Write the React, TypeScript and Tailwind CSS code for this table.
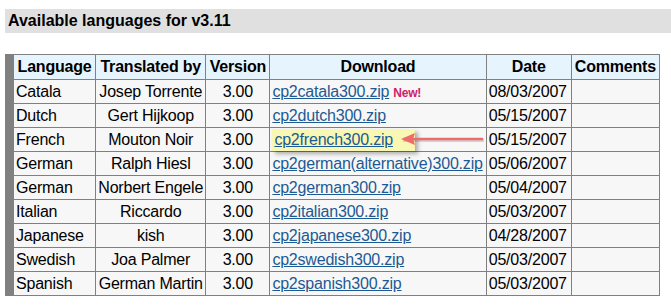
import React from "react";

const rows = [
  ["Catala", "Josep Torrente", "cp2catala300.zip", "08/03/2007"],
  ["Dutch", "Gert Hijkoop", "cp2dutch300.zip", "05/15/2007"],
  ["French", "Mouton Noir", "cp2french300.zip", "05/15/2007"],
  ["German", "Ralph Hiesl", "cp2german(alternative)300.zip", "05/06/2007"],
  ["German", "Norbert Engele", "cp2german300.zip", "05/04/2007"],
  ["Italian", "Riccardo", "cp2italian300.zip", "05/03/2007"],
  ["Japanese", "kish", "cp2japanese300.zip", "04/28/2007"],
  ["Swedish", "Joa Palmer", "cp2swedish300.zip", "05/03/2007"],
  ["Spanish", "German Martin", "cp2spanish300.zip", "05/03/2007"],
];

export default function App() {
  const cell = "border border-[#808080] px-[2px] h-[24px] p-0 leading-none whitespace-nowrap overflow-hidden";
  return (
    <div className="w-[671px] h-[307px] bg-white pt-[9px] pl-[5px] text-black" style={{ fontFamily: '"Liberation Sans", Arial, sans-serif' }}>
      <div className="h-[24px] bg-[#e0e0e0] pl-[3px] flex items-center text-[16px] font-bold">Available languages for v3.11</div>
      <div className="relative mt-[21px]">
        <table className="table-fixed w-[655px] border-collapse border-l-[9px] border-l-[#808080] text-[16px] tracking-[-0.2px] bg-[#f7f7f7]">
          <colgroup>
            <col className="w-[86px]" />
            <col className="w-[110px]" />
            <col className="w-[64px]" />
            <col className="w-[216px]" />
            <col className="w-[85px]" />
            <col className="w-[88px]" />
          </colgroup>
          <thead>
            <tr className="bg-[#e6f4fd] font-bold">
              <th className={`${cell} h-[25px] text-center`}>Language</th>
              <th className={`${cell} h-[25px] text-center`}>Translated by</th>
              <th className={`${cell} h-[25px] text-center`}>Version</th>
              <th className={`${cell} h-[25px] text-center`}>Download</th>
              <th className={`${cell} h-[25px] text-center`}>Date</th>
              <th className={`${cell} h-[25px] text-center`}>Comments</th>
            </tr>
          </thead>
          <tbody>
            {rows.map((r, i) => (
              <tr key={i}>
                <td className={`${cell} text-left`}>{r[0]}</td>
                <td className={`${cell} text-center`}>{r[1]}</td>
                <td className={`${cell} text-center`}>3.00</td>
                <td className={`${cell} text-left ${i === 2 ? "px-0 overflow-visible" : ""}`}>
                  {i === 2 ? (
                    <span className="inline-flex items-center h-[22px] w-[143px] pl-[2px] bg-[#f8f7b4] shadow-[3px_3px_4px_rgba(0,0,0,0.3)]">
                      <a className="text-[#1d5a94] underline">{r[2]}</a>
                    </span>
                  ) : (
                    <>
                      <a className="text-[#1d5a94] underline">{r[2]}</a>
                      {i === 0 && <span className="ml-[4px] text-[12px] font-bold text-[#d0206a]">New!</span>}
                    </>
                  )}
                </td>
                <td className={`${cell} text-left`}>{r[3]}</td>
                <td className={cell}></td>
              </tr>
            ))}
          </tbody>
        </table>
        <svg className="absolute left-[388px] top-[77px]" width="100" height="16" viewBox="0 0 100 16">
          <line x1="10" y1="9.5" x2="91" y2="9.5" stroke="rgba(0,0,0,0.15)" strokeWidth="3" />
          <line x1="12" y1="8" x2="89" y2="8" stroke="#ef6b6b" strokeWidth="2.5" strokeLinecap="round" />
          <polygon points="8,8 22,2 20,8 22,14" fill="#ef6b6b" />
        </svg>
      </div>
    </div>
  );
}
